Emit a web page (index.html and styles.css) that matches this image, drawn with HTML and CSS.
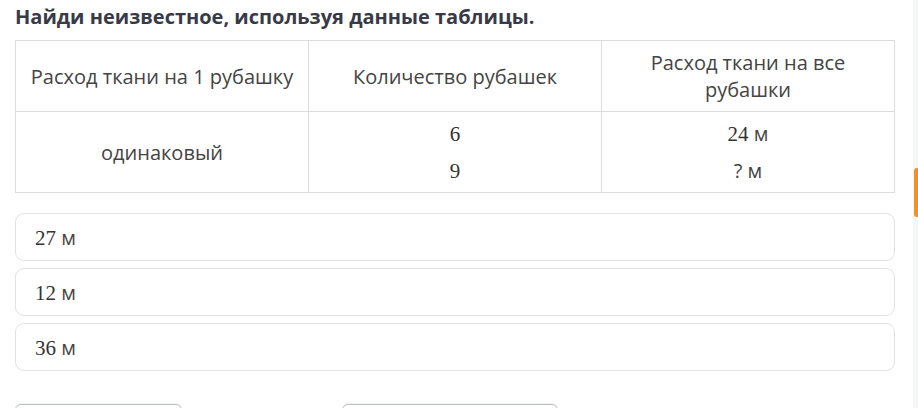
FILE: index.html
```html
<!DOCTYPE html>
<html lang="ru">
<head>
<meta charset="utf-8">
<link rel="stylesheet" href="styles.css">
</head>
<body>
<main class="page">
  <h1 class="title">Найди неизвестное, используя данные таблицы.</h1>
  <table class="data">
    <thead>
      <tr>
        <th>Расход ткани на 1 рубашку</th>
        <th>Количество рубашек</th>
        <th>Расход ткани на все<br>рубашки</th>
      </tr>
    </thead>
    <tbody>
      <tr>
        <td>одинаковый</td>
        <td><div class="stack"><span class="num">6</span><span class="num">9</span></div></td>
        <td><div class="stack"><span><span class="num">24</span> м</span><span>? м</span></div></td>
      </tr>
    </tbody>
  </table>
  <div class="options">
    <div class="option"><span><span class="num">27</span> м</span></div>
    <div class="option"><span><span class="num">12</span> м</span></div>
    <div class="option"><span><span class="num">36</span> м</span></div>
  </div>
  <div class="actions">
    <div class="btn btn-a"></div>
    <div class="btn btn-b"></div>
  </div>
</main>
<div class="rail"></div>
<div class="tab"></div>
</body>
</html>
```
FILE: styles.css
```css
html, body {
  margin: 0;
  padding: 0;
  background: #fff;
  overflow: hidden;
}
body {
  font-family: "Open Sans", "Noto Sans", sans-serif;
  color: #444;
  width: 918px;
  height: 408px;
}
.page {
  padding: 4px 24px 0 15px;
}
.title {
  margin: 0 0 10px 0;
  font-size: 20px;
  line-height: 26px;
  font-weight: 700;
  color: #383a48;
}
.data {
  width: 880px;
  border-collapse: collapse;
  table-layout: fixed;
  font-size: 20px;
}
.data th, .data td {
  border: 1px solid #dcdcdc;
  text-align: center;
  font-weight: 400;
  color: #444;
  padding: 0 8px;
}
.data th {
  height: 70px;
  line-height: 27px;
}
.data td {
  height: 80px;
}
.stack {
  display: flex;
  flex-direction: column;
  align-items: center;
  gap: 11px;
  line-height: 26px;
}
.num {
  font-family: "Liberation Serif", "DejaVu Serif", serif;
  font-size: 21px;
  color: #333;
}
.options {
  margin-top: 20px;
  display: flex;
  flex-direction: column;
  gap: 7px;
  width: 880px;
}
.option {
  box-sizing: border-box;
  height: 48px;
  border: 1px solid #e2e2e2;
  border-radius: 9px;
  padding: 0 19px;
  display: flex;
  align-items: center;
  font-size: 20px;
  color: #444;
}
.actions {
  margin-top: 33px;
  display: flex;
  gap: 160px;
}
.btn {
  box-sizing: border-box;
  height: 30px;
  border: 1px solid #b8bec3;
  border-radius: 6px;
  box-shadow: 0 -1px 2px rgba(0,0,0,0.06);
}
.btn-a { width: 167px; }
.btn-b { width: 216px; }
.rail {
  position: absolute;
  top: 0;
  right: 0;
  width: 5px;
  height: 408px;
  background: #f5f6f6;
}
.tab {
  position: absolute;
  top: 168px;
  right: 0;
  width: 4px;
  height: 49px;
  background: #f5921e;
  border-radius: 3px 0 0 3px;
}
```
